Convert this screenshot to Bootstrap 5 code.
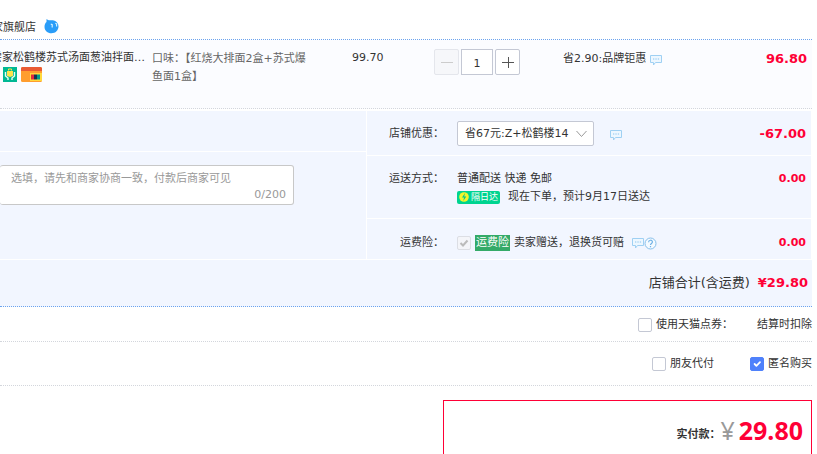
<!DOCTYPE html>
<html lang="zh-CN">
<head>
<meta charset="utf-8">
<meta name="viewport" content="width=device-width, initial-scale=1">
<title>确认订单</title>
<link href="https://cdn.jsdelivr.net/npm/bootstrap@5.3.0/dist/css/bootstrap.min.css" rel="stylesheet">
<style>
  body { font: 11px/18px "DejaVu Sans", "Noto Sans CJK SC", sans-serif; color: #333; background: #fff; overflow: hidden; }
  .order { margin-right: 5px; }
  svg { display: block; flex: none; }
  .shop-head { height: 40px; padding-top: 19px; border-bottom: 1px dotted #6ca3ee; }
  .cut-start { display: flex; justify-content: flex-end; overflow: hidden; white-space: nowrap; }
  .shop-name { width: 36px; }
  .item-row { display: grid; grid-template-columns: 145px 7px 200px 82px 86px 43px 1fr auto; height: 69px; padding: 9px 5px 0 0; background: #fbfcff; border-bottom: 1px dotted #d3d6dc; }
  .item-title { width: 145px; }
  .item-tags { padding-left: 3px; }
  .sku { padding-top: 1px; color: #666; white-space: nowrap; }
  .promo { padding-top: 1px; }
  .money { color: #ff0036; font-weight: 700; }
  .money-md { font-size: 13px; padding-top: 1px; }
  .step-btn { width: 25px; height: 26px; padding: 0; border: 1px solid #c4c8d4; border-radius: 2px; background: #fff; color: #555; display: flex; align-items: center; justify-content: center; }
  .step-btn:disabled { background: #f6f7fa; border-color: #e4e6ec; color: #ccc; }
  .step-input { width: 32px; height: 26px; padding: 2px 0 0; border: 1px solid #c4c8d4; text-align: center; color: #333; background: #fff; }
  .panel { display: grid; grid-template-columns: 366fr 444fr; column-gap: 1px; margin: 2px 1px 0 0; }
  .panel-side, .panel-row, .panel-note, .total-row { background: #f2f6ff; }
  .panel-side { height: 40px; }
  .panel-note { padding-top: 13px; flex: 1; }
  .stack { display: flex; flex-direction: column; row-gap: 1px; }
  .memo-box { width: 294px; height: 40px; position: relative; }
  .memo { display: block; width: 100%; height: 40px; resize: none; padding: 4px 11px; border: 1px solid #c8c8c8; border-left: 0; border-radius: 3px; font-size: 11px; line-height: 18px; overflow: hidden; background: #fff; }
  .memo::placeholder { color: #999; opacity: 1; }
  .counter { position: absolute; right: 8px; bottom: 1px; color: #999; }
  .panel-row { display: grid; grid-template-columns: 77px 1fr auto; column-gap: 13px; padding-right: 5px; }
  .row-discount { height: 44px; padding-top: 10px; }
  .row-ship { height: 62px; padding-top: 14px; }
  .row-insure { height: 40px; padding-top: 15px; }
  .label-end { text-align: right; white-space: nowrap; }
  .coupon { width: 137px; height: 25px; padding: 0 22px 0 7px; border: 1px solid #c4c8d4; border-radius: 2px; font-size: 11px; line-height: 22px; color: #333; background-color: #fff; background-image: none; }
  .coupon-box { display: grid; }
  .coupon-box > * { grid-area: 1 / 1; }
  .coupon-box svg { justify-self: end; align-self: center; margin-right: 7px; pointer-events: none; }
  .speed-tag { display: inline-flex; align-items: center; gap: 2px; width: 43px; height: 13px; padding-left: 2px; border-radius: 2px; background: #00d490; color: #fff; font-size: 9px; line-height: 13px; white-space: nowrap; }
  .insure-tag { height: 16px; padding: 0 1px; background: #34aa68; color: #fff; line-height: 16px; }
  .tick { width: 14px; height: 14px; margin: 0; flex: none; border: 1px solid #c4c8d4; border-radius: 2px !important; box-shadow: none; float: none; background-color: #fff; }
  .tick:checked { background-color: #4f81fb; border-color: #4f81fb; }
  .tick:checked:disabled { background-color: #f4f5f9; background-image: none; border-color: #dcdee4; opacity: 1; }
  .tick-box { display: grid; place-items: center; }
  .tick-box > * { grid-area: 1 / 1; }
  .tick-box svg { pointer-events: none; z-index: 1; }
  .tick-label { padding-left: 4px; }
  .total-row { height: 47px; margin-top: 1px; padding: 0 4px 0 0; border-bottom: 1px dotted #6ca3ee; font-size: 13px; }
  .option-row { border-bottom: 1px dotted #d3d6dc; }
  .opt-points { height: 35px; padding-top: 1px; }
  .opt-privacy { height: 44px; }
  .opt-friend { margin-right: 36px; }
  .pay-box { width: 369px; height: 70px; margin-top: 14px; padding: 14px 8px 0 0; border: 1px solid #ff0036; border-bottom: 0; }
  .pay-label { font-weight: 700; padding-top: 11px; }
  .pay-sign { color: #999; font: 25px/30px "Noto Sans", sans-serif; }
  .pay-sum { color: #ff0036; font: 700 25px/30px "Noto Sans", sans-serif; }
</style>
</head>
<body>
<svg width="0" height="0" class="position-absolute" aria-hidden="true">
  <symbol id="chat" viewBox="0 0 12 12"><path d="M.5 1.500h11v7H5.500L3.500 11V8.500h-3z" fill="#edf7ff" stroke="#9fd0f3" stroke-linejoin="round"/><path d="M3 5h1.300M5.400 5h1.300M7.800 5h1.300" stroke="#8cc5ef"/></symbol>
</svg>
<main class="order">
  <header class="shop-head d-flex">
    <span class="shop-name cut-start">家旗舰店</span>
    <svg class="ms-2 me-auto" width="15" height="16" viewBox="0 0 15 16" aria-hidden="true"><path d="M2.500 0c1 1 2 1.300 3.500 1.300h3c3.500.8 5.500 3 5.500 6 0 4.200-3 7-7 7s-7-2.500-7-6.500C.5 5.500 1.300 4 2.500 3z" fill="#2a9df8"/><path d="M6.800 5.200l1.400.4v3M11.300 4.300l1.300.6v2.500" fill="none" stroke="#d4f0ff" stroke-width="1.200"/></svg>
  </header>

  <section class="item-row">
    <div>
      <div class="item-title cut-start">尝家松鹤楼苏式汤面葱油拌面…</div>
      <div class="item-tags d-flex gap-1">
        <svg width="14" height="15" viewBox="0 0 14 15" aria-hidden="true"><path fill="#00b894" d="M0 0h14v15H0z"/><path d="M4 4h6v5l-3 1-3-1z" fill="#ffe34d"/><path d="M5.500 3.500V2h3v1.500" fill="none" stroke="#ffe34d"/><path d="M2.500 5v4L5 11v2M11.500 5v4L9 11v2" fill="none" stroke="#eafff7" stroke-width="1.400"/></svg>
        <svg width="21" height="15" viewBox="0 0 21 15" aria-hidden="true"><rect width="21" height="15" rx="1.500" fill="#ff9d2f"/><path d="M1.500 0h18A1.500 1.500 0 0121 1.500V4H0V1.500A1.500 1.500 0 011.500 0z" fill="#e95a33"/><path fill="#ffd83b" d="M9 6h12v8H9z"/><path fill="#e3283e" d="M10 7.500h3v5h-3z"/><path fill="#1a3151" d="M13 7.500h3v5h-3z"/><path fill="#009c8b" d="M16 7.500h3v5h-3z"/></svg>
      </div>
    </div>
    <span></span>
    <div class="sku">口味：【红烧大排面2盒+苏式爆<br>鱼面1盒】</div>
    <div>99.70</div>
    <div class="d-flex align-items-start justify-content-between">
      <button class="step-btn" type="button" disabled aria-label="减少数量"><svg width="12" height="12" viewBox="0 0 12 12"><path d="M0 6.500h12" stroke="currentColor"/></svg></button>
      <input class="step-input" type="text" value="1" aria-label="数量">
      <button class="step-btn" type="button" aria-label="增加数量"><svg width="12" height="12" viewBox="0 0 12 12"><path d="M0 6.500h12M6.500 1v11" stroke="currentColor"/></svg></button>
    </div>
    <span></span>
    <div class="promo d-flex gap-1"><span>省2.90:品牌钜惠</span><svg class="mt-1" width="12" height="12"><use href="#chat"/></svg></div>
    <div class="money money-md">96.80</div>
  </section>

  <section class="panel">
    <div class="stack">
      <div class="panel-side"></div>
      <div class="panel-note">
        <div class="memo-box">
          <textarea class="memo" aria-label="给卖家留言" placeholder="选填，请先和商家协商一致，付款后商家可见"></textarea>
          <span class="counter">0/200</span>
        </div>
      </div>
    </div>
    <div class="stack">
      <div class="panel-row row-discount">
        <label class="label-end pt-1" for="coupon">店铺优惠：</label>
        <div class="d-flex align-items-start">
          <div class="coupon-box">
            <select class="form-select coupon" id="coupon"><option>省67元:Z+松鹤楼14</option></select>
            <svg width="11" height="8" viewBox="0 0 11 8" aria-hidden="true"><path d="M.5 1l5 5.500 5-5.500" fill="none" stroke="#999"/></svg>
          </div>
          <svg class="ms-3 mt-2" width="12" height="12"><use href="#chat"/></svg>
        </div>
        <div class="money money-md pt-1">-67.00</div>
      </div>
      <div class="panel-row row-ship">
        <div class="label-end">运送方式：</div>
        <div>
          <div>普通配送 快递 免邮</div>
          <div class="d-flex align-items-center gap-2">
            <span class="speed-tag"><svg width="10" height="10" viewBox="0 0 10 10" aria-hidden="true"><circle cx="5" cy="5" r="4.800" fill="#f4f52b"/><path d="M6 1L3 5.500h2L4.300 9 7.300 4.500H5.200z" fill="#00c98b"/></svg>隔日达</span>
            <span>现在下单，预计9月17日送达</span>
          </div>
        </div>
        <div class="money">0.00</div>
      </div>
      <div class="panel-row row-insure">
        <label class="label-end" for="insure">运费险：</label>
        <div class="d-flex align-items-center align-self-start">
          <span class="tick-box"><input class="form-check-input tick" type="checkbox" id="insure" checked disabled><svg width="14" height="14" viewBox="0 0 14 14" aria-hidden="true"><path d="M3.500 7l2.500 2.500 4.500-5" fill="none" stroke="#bbb" stroke-width="2"/></svg></span>
          <span class="insure-tag mx-1">运费险</span>
          <span>卖家赠送，退换货可赔</span>
          <svg class="ms-2" width="12" height="12"><use href="#chat"/></svg>
          <svg width="13" height="13" viewBox="0 0 13 13" aria-hidden="true"><circle cx="6.500" cy="6.500" r="5.500" fill="#f4faff" stroke="#86bfeb"/><path d="M4.600 5.200c0-2.600 3.800-2.600 3.800-.2 0 1.400-1.900 1.500-1.900 3M6.500 9v1.200" fill="none" stroke="#6fb1e6" stroke-width="1.200"/></svg>
        </div>
        <div class="money">0.00</div>
      </div>
    </div>
  </section>

  <section class="total-row d-flex justify-content-end align-items-center">
    <span class="me-2">店铺合计(含运费)</span><span class="money">¥29.80</span>
  </section>
  <section class="option-row opt-points d-flex justify-content-end align-items-center">
    <input class="form-check-input tick" type="checkbox" id="points"><label class="tick-label" for="points">使用天猫点券：</label>
    <span class="ms-4">结算时扣除</span>
  </section>
  <section class="option-row opt-privacy d-flex justify-content-end align-items-center">
    <input class="form-check-input tick" type="checkbox" id="friend"><label class="tick-label opt-friend" for="friend">朋友代付</label>
    <input class="form-check-input tick" type="checkbox" id="anon" checked><label class="tick-label" for="anon">匿名购买</label>
  </section>
  <section class="pay-box ms-auto d-flex justify-content-end">
    <span class="pay-label">实付款：</span><span class="pay-sign me-1">¥</span><span class="pay-sum">29.80</span>
  </section>
</main>
<script src="https://cdn.jsdelivr.net/npm/bootstrap@5.3.0/dist/js/bootstrap.bundle.min.js"></script>
</body>
</html>
